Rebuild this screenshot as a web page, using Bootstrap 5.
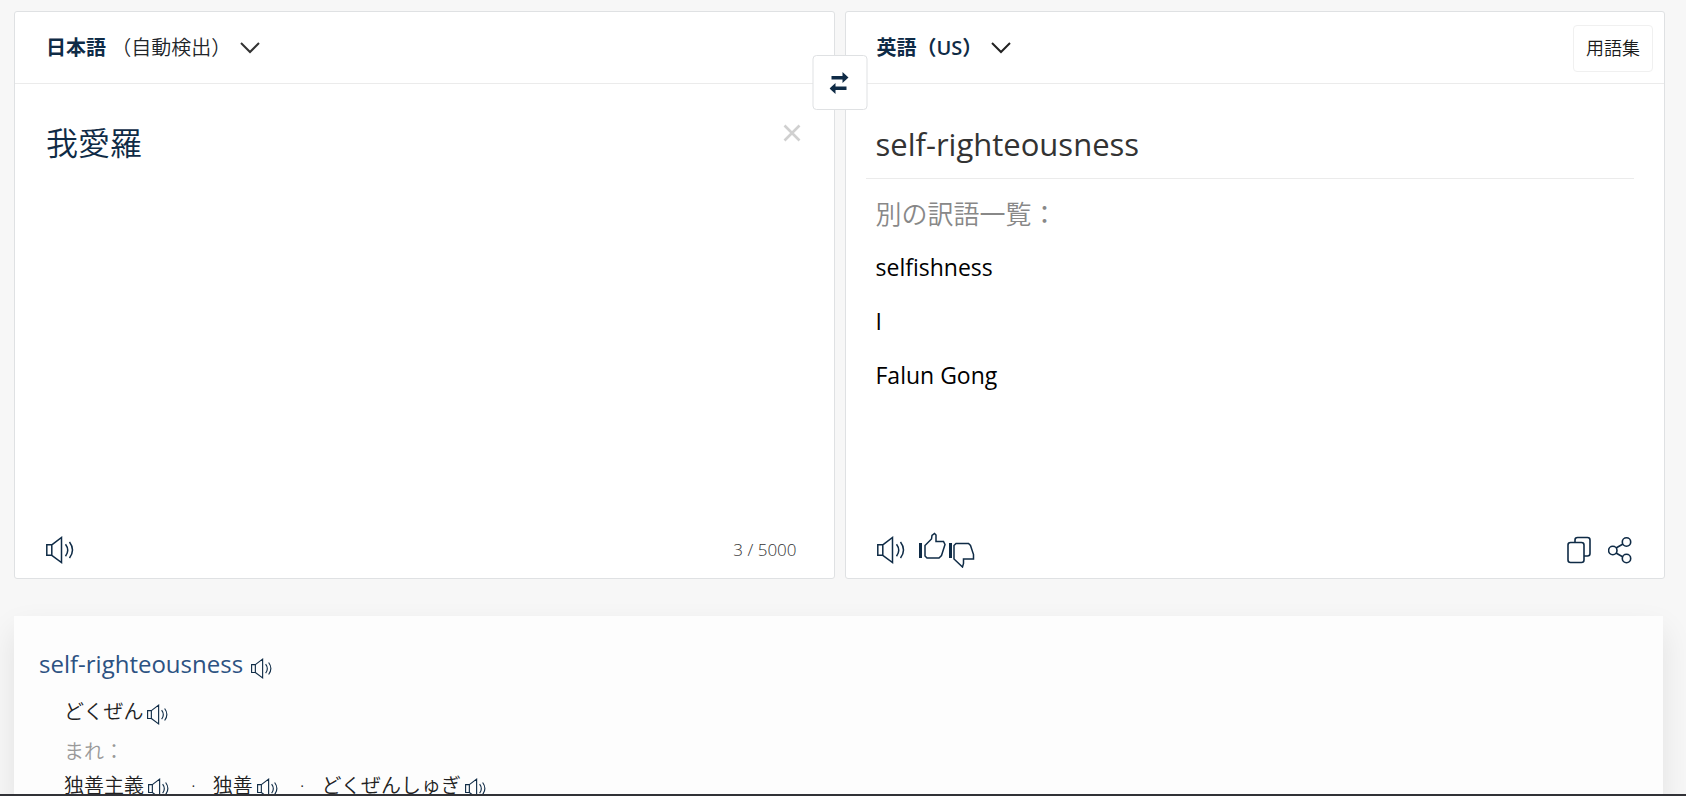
<!DOCTYPE html>
<html lang="ja">
<head>
<meta charset="utf-8">
<meta name="viewport" content="width=device-width, initial-scale=1">
<title>翻訳</title>
<link href="https://cdn.jsdelivr.net/npm/bootstrap@5.3.0/dist/css/bootstrap.min.css" rel="stylesheet">
<style>
body { background: #f7f7f7; color: #333; font-family: "Open Sans", "Noto Sans CJK JP", sans-serif; }
.navy { color: #0f2b46; }
.translator { margin: 11px 21px 0 14px; gap: 10px; }
.pane { background: #fff; border: 1px solid #dfe1e3; border-radius: 3px; min-height: 568px; min-width: 0; flex: 1 1 0; }
.pane-head { height: 72px; border-bottom: 1px solid #ebebeb; padding: 1px 11px 0 31px; }
.lang { font-size: 20px; line-height: 28px; gap: 9px; }
.light-jp { font-weight: 350; }
.glossary { border: 1px solid #f0f0f0; border-radius: 4px; font-size: 18px; line-height: 27px; padding: 9px 12px; color: #1b1b1b; font-weight: 350; }
.swap { top: 44px; left: 50%; transform: translateX(-50%); width: 55px; height: 55px; border: 1px solid #dfe1e3; border-radius: 4px; background: #fff; }
.source-text { resize: none; font-size: 32px; line-height: 44px; padding: 37px 0 0 31px; color: #0f2b46; font-weight: 350; }
.clear { margin: 40px 33px 0 8px; }
.pane-foot { height: 56px; padding: 0 32px 0 31px; }
.count { font-size: 17px; line-height: 24px; padding-right: 5px; font-weight: 300; color: #333; }
.result { font-size: 31px; line-height: 44px; margin: 0 30px 0 20px; padding: 38px 10px 12px; border-bottom: 1px solid #ebebeb; }
.alt { padding: 16px 30px 0; }
.alt-title { font-size: 26px; line-height: 38px; color: #888; font-weight: 350; margin-bottom: 15px; }
.alt-list a { font-size: 23px; line-height: 38px; color: #000; }
.alt-list { gap: 16px; }
.rate { margin-left: 14px; }
.dict { background: #fdfdfd; margin: 37px 23px 0 14px; padding: 31px 25px 0; box-shadow: 0 14px 30px rgba(0,0,0,.09); }
.dict-word { font-size: 24px; line-height: 34px; color: #2c5282; }
.entries { padding: 12px 0 0 25px; }
.entry { font-size: 20px; line-height: 30px; color: #222; font-weight: 350; gap: 4px; padding-top: 4px; }
.rare { font-size: 20px; line-height: 30px; color: #999; font-weight: 350; padding-top: 10px; }
.dot { padding: 0 13px 0 18px; }
.edge { height: 2px; background: #313237; }
svg { display: block; fill: none; stroke: #0f2b46; flex: none; }
</style>
</head>
<body class="vh-100 overflow-hidden d-flex flex-column">
<svg width="0" height="0" class="position-absolute" aria-hidden="true">
  <symbol id="speaker" viewBox="0 0 28 28">
    <path d="M.8 8.8h5v10.500h-5zM5.800 8.800 15.500 1.500v25L5.800 19.300M19.500 8.200q4.500 6 0 12M23.500 6q6 8 0 16" stroke-width="1.500"/>
  </symbol>
</svg>
<main class="flex-fill overflow-hidden">
  <div class="translator d-flex position-relative">
    <section class="pane d-flex flex-column">
      <div class="pane-head d-flex align-items-center">
        <button type="button" class="lang btn border-0 p-0 d-flex align-items-center">
          <span><strong class="navy">日本語</strong> <span class="light-jp">（自動検出）</span></span>
          <svg width="20" height="12" viewBox="0 0 20 12" style="stroke:#333"><path d="M1 1l9 9 9-9" stroke-width="2"/></svg>
        </button>
      </div>
      <div class="d-flex flex-fill align-items-start">
        <textarea class="source-text flex-fill align-self-stretch border-0 bg-transparent shadow-none" aria-label="原文">我愛羅</textarea>
        <button type="button" class="clear btn border-0 p-0" aria-label="クリア">
          <svg width="18" height="18" viewBox="0 0 18 18" style="stroke:#d0d0d0"><path d="M1.500 1.500l15 15M16.500 1.500l-15 15" stroke-width="2.600"/></svg>
        </button>
      </div>
      <div class="pane-foot d-flex align-items-center justify-content-between">
        <button type="button" class="btn border-0 p-0" aria-label="読み上げ"><svg width="28" height="28"><use href="#speaker"/></svg></button>
        <span class="count">3 / 5000</span>
      </div>
    </section>
    <button type="button" class="swap btn p-0 position-absolute d-flex align-items-center justify-content-center" aria-label="言語を入れ替える">
      <svg width="20" height="22" viewBox="0 0 20 22" style="fill:#0f2b46;stroke:none"><path d="M2 4h11V0l6 5.500-6 5.500V7.500H2zM17 14.500H6V11L0 16.500 6 22v-4h11z"/></svg>
    </button>
    <section class="pane d-flex flex-column">
      <div class="pane-head d-flex align-items-center justify-content-between">
        <button type="button" class="lang btn border-0 p-0 d-flex align-items-center">
          <strong class="navy">英語（<span class="fw-semibold">US</span>）</strong>
          <svg width="20" height="12" viewBox="0 0 20 12" style="stroke:#222"><path d="M1 1l9 9 9-9" stroke-width="2"/></svg>
        </button>
        <button type="button" class="glossary btn">用語集</button>
      </div>
      <div class="flex-fill">
        <div class="result">self-righteousness</div>
        <div class="alt">
          <div class="alt-title">別の訳語一覧：</div>
          <div class="alt-list d-flex flex-column align-items-start">
            <a href="#" class="text-decoration-none">selfishness</a>
            <a href="#" class="text-decoration-none">I</a>
            <a href="#" class="text-decoration-none">Falun Gong</a>
          </div>
        </div>
      </div>
      <div class="pane-foot d-flex align-items-center">
        <button type="button" class="btn border-0 p-0" aria-label="読み上げ"><svg width="28" height="28"><use href="#speaker"/></svg></button>
        <div class="rate d-flex me-auto">
          <button type="button" class="btn border-0 p-0" aria-label="良い翻訳">
            <svg width="29" height="36" viewBox="0 0 29 36"><path d="M1.500 11v15" stroke-width="3"/><path d="M6 13.500 12.500 7l.5-3.500L15.500 1.500 17 3v6.500h7.500l1.500 3-3.500 11-2.500 2.500H8l-2-2z" stroke-width="1.500"/></svg>
          </button>
          <button type="button" class="btn border-0 p-0" aria-label="悪い翻訳">
            <svg width="28" height="36" viewBox="0 0 28 36"><path d="M2.500 11v15" stroke-width="3"/><path d="M6 13.500l2-2h12.500l2 2 3 9v4.500h-10v4.500L14.500 35 6 27z" stroke-width="1.500"/></svg>
          </button>
        </div>
        <button type="button" class="btn border-0 p-0" aria-label="コピー">
          <svg width="26" height="28" viewBox="0 0 26 28"><g stroke-width="1.600"><rect x="2" y="6.500" width="16" height="20" rx="2.500"/><path d="M9 6V4q0-2.500 2.500-2.500h10Q24 1.500 24 4v13.500q0 2.500-2.500 2.500H18"/></g></svg>
        </button>
        <button type="button" class="btn border-0 p-0 ms-3" aria-label="共有">
          <svg width="24" height="28" viewBox="0 0 24 28"><g stroke-width="1.600"><circle cx="4.800" cy="14.500" r="4.200"/><circle cx="18.500" cy="6" r="4.200"/><circle cx="18.500" cy="22.500" r="4.200"/><path d="M8 12l7-4M8 17l7 4"/></g></svg>
        </button>
      </div>
    </section>
  </div>
  <section class="dict">
    <div class="d-flex align-items-center gap-2">
      <span class="dict-word">self-righteousness</span>
      <button type="button" class="btn border-0 p-0 pt-2" aria-label="読み上げ"><svg width="21" height="21"><use href="#speaker"/></svg></button>
    </div>
    <div class="entries">
      <div class="entry d-flex align-items-center">どくぜん
        <button type="button" class="btn border-0 p-0 pt-1" aria-label="読み上げ"><svg width="21" height="21"><use href="#speaker"/></svg></button>
      </div>
      <div class="rare">まれ：</div>
      <div class="entry d-flex align-items-center">独善主義
        <button type="button" class="btn border-0 p-0 pt-1" aria-label="読み上げ"><svg width="21" height="21"><use href="#speaker"/></svg></button>
        <span class="dot">·</span>独善
        <button type="button" class="btn border-0 p-0 pt-1" aria-label="読み上げ"><svg width="21" height="21"><use href="#speaker"/></svg></button>
        <span class="dot">·</span>どくぜんしゅぎ
        <button type="button" class="btn border-0 p-0 pt-1" aria-label="読み上げ"><svg width="21" height="21"><use href="#speaker"/></svg></button>
      </div>
    </div>
  </section>
</main>
<div class="edge flex-shrink-0"></div>
<script src="https://cdn.jsdelivr.net/npm/bootstrap@5.3.0/dist/js/bootstrap.bundle.min.js"></script>
</body>
</html>
